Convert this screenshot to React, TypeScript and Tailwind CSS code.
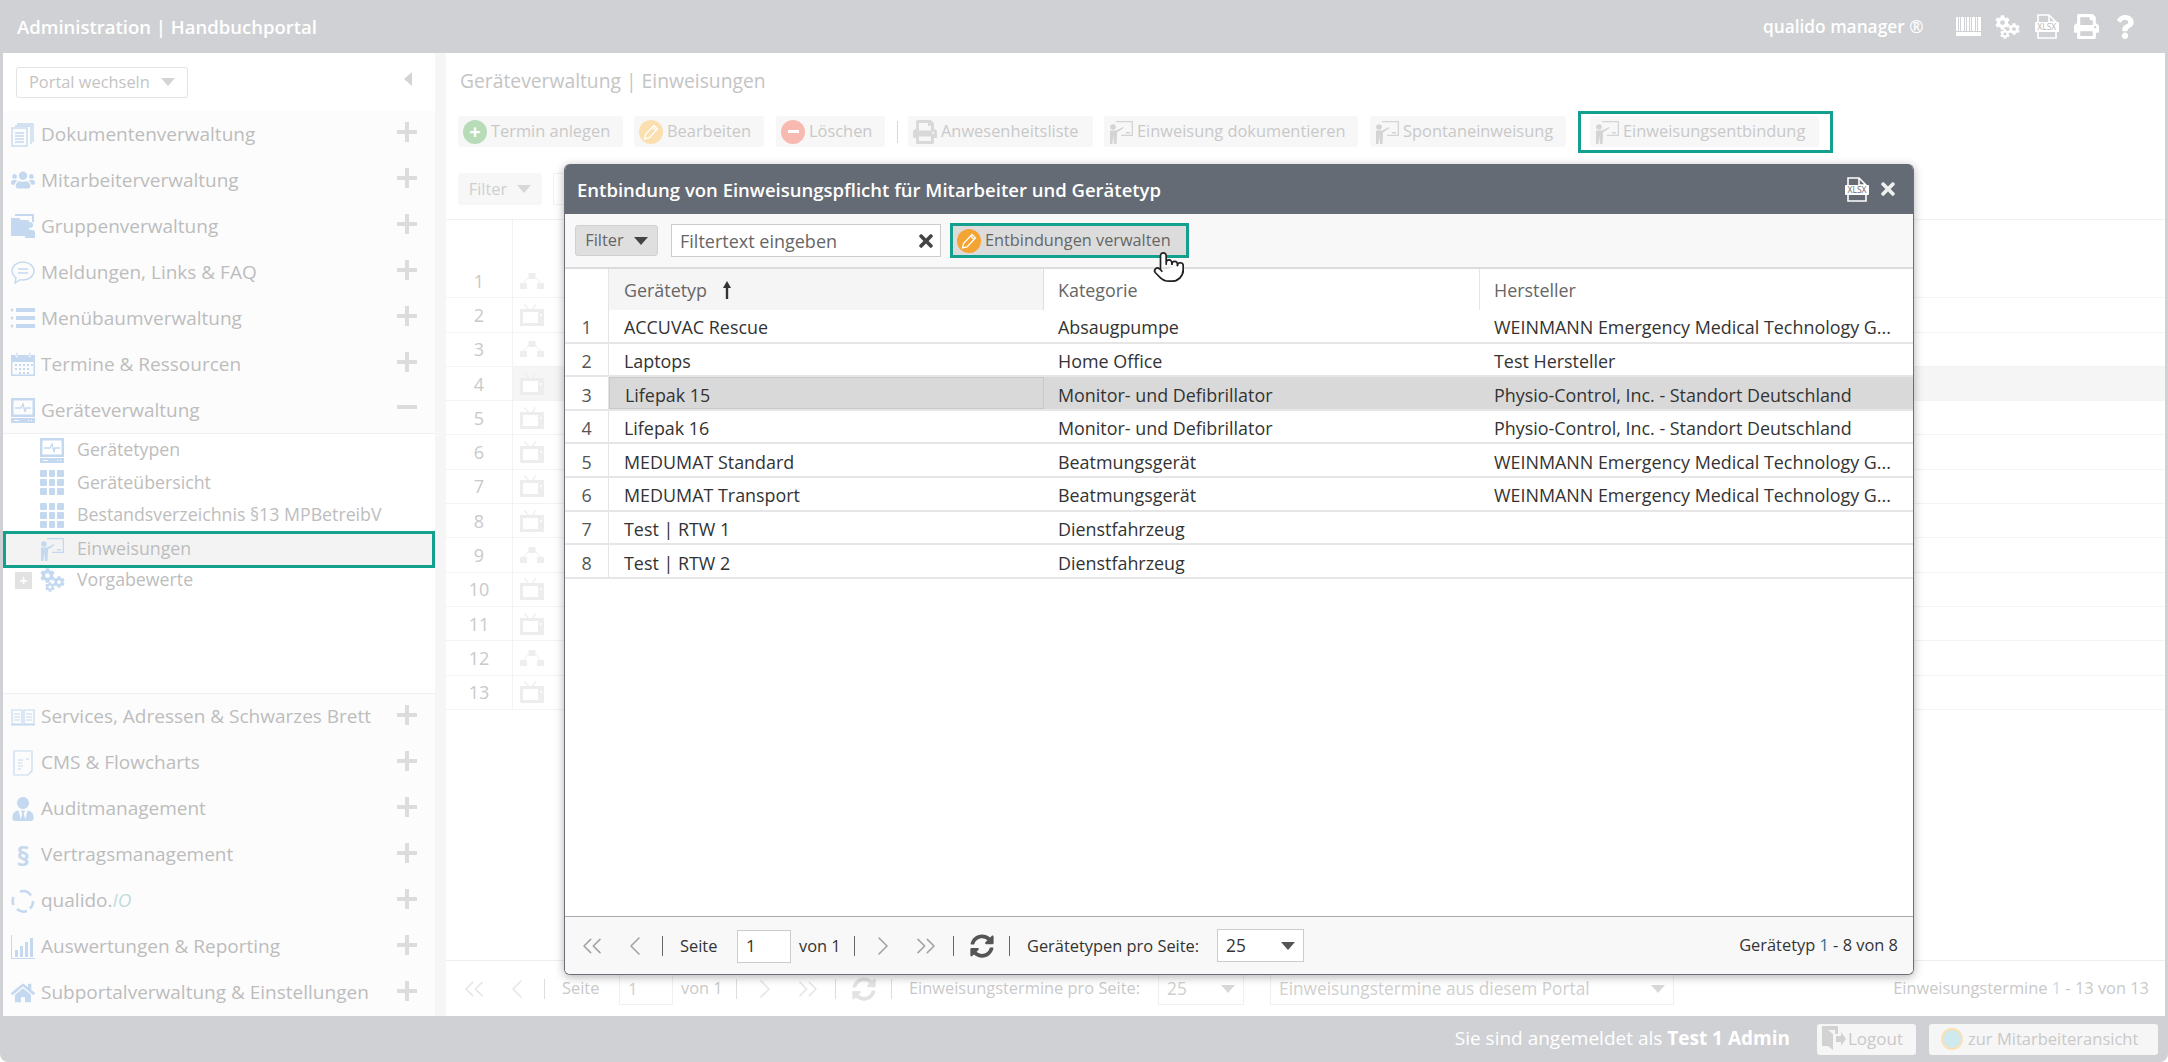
import React from 'react';
import { ChevronLeft, ChevronRight, ChevronsLeft, ChevronsRight, Pointer } from 'lucide-react';
import { FaCog, FaHome, FaPrint, FaQuestion, FaSyncAlt, FaTimes, FaUsers, FaUserTie } from 'react-icons/fa';

const BLUE = '#c4d9ef';

// Small drawn icons from the original icon set
const Docs = () => (
  <svg width="24" height="26" viewBox="0 0 24 26" fill="none" stroke={BLUE} strokeWidth="1.3">
    <path d="M6 3h16v18M4 5h16v18" />
    <rect x="1" y="7" width="15" height="18" fill="#fcfcfc" />
    <path d="M4 12h9M4 15h9M4 18h9M4 21h9" />
  </svg>
);
const Folder = () => (
  <svg width="24" height="26" viewBox="0 0 24 26" fill={BLUE}>
    <path d="M0 5h8l2 2h8v16H0z" />
    <path d="M4 3V1h19v8h-2V3z" />
    <circle cx="19" cy="12" r="3" />
    <path d="M14 25v-6c0-3 10-3 10 0v6z" />
  </svg>
);
const Bubble = () => (
  <svg width="24" height="24" viewBox="0 0 24 24" fill="none" stroke={BLUE} strokeWidth="1.4">
    <path d="M12 2c6 0 11 4 11 9s-5 9-11 9c-1 0-2 0-3-.3L4 23l1-5c-2-2-4-4-4-7 0-5 5-9 11-9z" />
    <path d="M7 9h10M7 13h10" />
  </svg>
);
const ListIcon = () => (
  <svg width="24" height="22" viewBox="0 0 24 22" fill={BLUE}>
    <path d="M0 1l3 2-3 2zM0 9l3 2-3 2zM0 17l3 2-3 2z" />
    <rect x="5" y="1" width="19" height="4" />
    <rect x="5" y="9" width="19" height="4" />
    <rect x="5" y="17" width="19" height="4" />
  </svg>
);
const Calendar = () => (
  <svg width="24" height="24" viewBox="0 0 24 24" fill={BLUE}>
    <path d="M0 3h24v21H0zm1.500 7v12.500h21V10z" fillRule="evenodd" />
    <path d="M4 12h2v2H4zM8 12h2v2H8zM12 12h2v2h-2zM16 12h2v2h-2zM20 12h2v2h-2zM4 16h2v2H4zM8 16h2v2H8zM12 16h2v2h-2zM16 16h2v2h-2zM8 20h2v2H8zM12 20h2v2h-2zM16 20h2v2h-2z" />
    <rect x="5" y="0" width="1.500" height="5" stroke="#fcfcfc" strokeWidth=".5" />
    <rect x="18" y="0" width="1.500" height="5" stroke="#fcfcfc" strokeWidth=".5" />
  </svg>
);
const Device = () => (
  <svg width="24" height="25" viewBox="0 0 24 25">
    <path d="M0 0h24v19H0zm2.500 2.500v14h19v-14z" fill={BLUE} fillRule="evenodd" />
    <path d="M4 10h6l2-4 2 8 1-4h5" fill="none" stroke={BLUE} strokeWidth="1.300" />
    <path d="M0 20h24v5H0zM3 22v1h5v-1zM17 22v1h1v-1zM20 22v1h1v-1z" fill={BLUE} fillRule="evenodd" />
  </svg>
);
const Grid9 = () => (
  <div className="grid grid-cols-3 gap-[2px] w-[24px]">
    {Array.from({ length: 9 }).map((_, i) => (
      <div key={i} className="h-[7px] rounded-[1px] bg-[#c4d9ef]" />
    ))}
  </div>
);
const Gears = ({ color }: { color: string }) => (
  <div className="relative w-[25px] h-[24px] shrink-0" style={{ color }}>
    <FaCog size={15} className="absolute left-0 top-0" />
    <FaCog size={12} className="absolute right-0 top-[8px]" />
    <FaCog size={10} className="absolute left-[5px] bottom-0" />
  </div>
);
const Teacher = ({ color = BLUE, w = 24 }: { color?: string; w?: number }) => (
  <svg width={w} height={w} viewBox="0 0 24 24" fill="none">
    <path d="M7 1h17v15H12v-1.300h10.700V2.300H7z" fill={color} />
    <circle cx="4" cy="7" r="2.800" fill={color} />
    <path d="M1 10.500h6l7-3.500.6 1-6.600 4.500v3L7.500 24H5l-.8-8-.8 8H1z" fill={color} />
    <rect x="17" y="12" width="4" height="1.500" fill={color} />
  </svg>
);
const Book = () => (
  <svg width="24" height="18" viewBox="0 0 24 18" fill="none" stroke={BLUE} strokeWidth="1.200">
    <path d="M1 2h10v14H1zM13 2h10v14H13zM0 17h24" />
    <path d="M3 6h6M3 9h6M3 12h6M15 6h6M15 9h6M15 12h6" />
  </svg>
);
const Page = () => (
  <svg width="20" height="26" viewBox="0 0 20 26" fill="none" stroke={BLUE} strokeWidth="1.200">
    <path d="M1 1h18v20l-4 4H1z" />
    <path d="M5 10h5M5 13h4M5 16h5M5 19h3M13 9h3" />
  </svg>
);
const Cycle = () => (
  <svg width="24" height="24" viewBox="0 0 24 24" fill="none" stroke={BLUE} strokeWidth="2.500">
    <path d="M9 2.500a10 10 0 0 1 11 4M22 12a10 10 0 0 1-3 7.500M16 22a10 10 0 0 1-10-2M2.500 16a10 10 0 0 1 0-8" />
  </svg>
);
const Bars = () => (
  <svg width="24" height="24" viewBox="0 0 24 24" fill={BLUE}>
    <path d="M0 0h1v23h23v1H0z" />
    <rect x="4" y="15" width="3" height="7" />
    <rect x="9" y="11" width="3" height="11" />
    <rect x="14" y="7" width="3" height="15" />
    <rect x="19" y="3" width="3" height="19" />
  </svg>
);
const Plus = () => (
  <svg width="20" height="20" viewBox="0 0 20 20" fill="#dcdcdc" className="-mt-[4px]">
    <rect x="0" y="8" width="20" height="4" />
    <rect x="8" y="0" width="4" height="20" />
  </svg>
);
const Minus = () => (
  <svg width="20" height="20" viewBox="0 0 20 20" fill="#dcdcdc" className="-mt-[6px]">
    <rect x="0" y="8" width="20" height="4" />
  </svg>
);
const Tv = () => (
  <svg width="24" height="22" viewBox="0 0 24 22">
    <path d="M5 0l4 5h3l3-5 1 .5L13.500 5H24v17H0V5h7.500L4 1z" fill="#ededed" />
    <rect x="3" y="8" width="15" height="11" fill="#fff" />
    <circle cx="21" cy="11" r="1" fill="#fff" />
  </svg>
);
const Net = () => (
  <svg width="24" height="16" viewBox="0 0 24 16" fill="#eeeeee">
    <rect x="8.500" y="0" width="7" height="6" />
    <rect x="0" y="10" width="7" height="6" />
    <rect x="17" y="10" width="7" height="6" />
    <path d="M9 4L3 10M15 4l6 6" stroke="#eeeeee" fill="none" />
  </svg>
);
const Xlsx = ({ ink }: { ink: string }) => (
  <div className="relative w-[24px] h-[25px] shrink-0">
    <svg width="24" height="25" viewBox="0 0 24 25" fill="none" stroke="#fff" strokeWidth="1.600">
      <path d="M3 8V1h11l7 7v1M21 18v6H3v-6M14 1v7h7" />
    </svg>
    <span className="absolute left-0 top-[8px] w-[24px] h-[10px] rounded-[1px] bg-white text-center text-[8.500px] leading-[10px]" style={{ color: ink }}>XLSX</span>
  </div>
);
const Barcode = () => (
  <svg width="25" height="19" viewBox="0 0 25 19" fill="#fff">
    <path d="M0 0h2v14H0zM3 0h1v14H3zM5 0h3v14H5zM9 0h1v14H9zM11 0h2v14h-2zM14 0h1v14h-1zM16 0h3v14h-3zM20 0h1v14h-1zM22 0h3v14h-3zM0 15h25v4H0z" />
  </svg>
);

const Triangle = ({ color }: { color: string }) => (
  <svg width="14" height="8" viewBox="0 0 14 8" fill={color} className="shrink-0">
    <path d="M0 0h14L7 8z" />
  </svg>
);

const NavRow = ({ icon, label, open, low }: { icon: React.ReactNode; label: React.ReactNode; open?: boolean; low?: boolean }) => (
  <div className="h-[46px] flex items-center pl-[8px] pr-[18px] text-[19px] text-[#bdbdbd]">
    <div className="w-[24px] flex justify-center shrink-0">{icon}</div>
    <span className={`ml-[6px] flex-1 whitespace-nowrap ${low ? '-mt-[1px]' : ''}`}>{label}</span>
    {open ? <Minus /> : <Plus />}
  </div>
);

const SubRow = ({ icon, label }: { icon: React.ReactNode; label: string }) => (
  <div className="h-[32.500px] flex items-center pl-[37px] text-[17.750px] text-[#bdbdbd]">
    <div className="w-[24px] flex justify-center shrink-0">{icon}</div>
    <span className="ml-[13px] -mt-[1px] whitespace-nowrap">{label}</span>
  </div>
);

const ToolBtn = ({ icon, label, w }: { icon: React.ReactNode; label: string; w: string }) => (
  <div className={`${w} h-[31px] flex items-center pl-[5px] rounded-[3px] bg-[#f7f7f7] text-[16.400px] text-[#c9c9c9] whitespace-nowrap shrink-0`}>
    {icon}
    <span className="ml-[4px] -mt-[1px]">{label}</span>
  </div>
);

const RoundIcon = ({ bg, children }: { bg: string; children: React.ReactNode }) => (
  <div className={`w-[24px] h-[24px] rounded-full flex items-center justify-center shrink-0 ${bg}`}>{children}</div>
);

const Pencil = ({ color }: { color: string }) => (
  <svg width="16" height="16" viewBox="0 0 16 16" fill="none" stroke={color} strokeWidth="1.300">
    <path d="M11 1.500l3.500 3.500L6 14l-4.500 1 1-4.500zM9.500 3l3.500 3.500" />
  </svg>
);

const Sep = ({ color }: { color: string }) => <div className={`w-px h-[20px] shrink-0 ${color}`} />;

const Slot = ({ children, ml }: { children: React.ReactNode; ml?: boolean }) => (
  <div className={`w-[43px] flex justify-center shrink-0 ${ml ? 'ml-[6px]' : ''}`}>{children}</div>
);

const Pager = ({ active, label }: { active?: boolean; label: string }) => {
  const icon = active ? '#a3a3a3' : '#e6e6e6';
  const sep = active ? 'bg-[#666]' : 'bg-[#dedede]';
  const text = active ? 'text-[#333] pt-[1px]' : 'text-[#c9c9c9]';
  const box = active ? 'border-[#ccc] text-[#333] bg-white' : 'border-[#f0f0f0] text-[#cfcfcf] bg-white';
  return (
    <div className={`flex items-center text-[16.400px] whitespace-nowrap ${text}`}>
      <Slot><ChevronsLeft size={32} strokeWidth={1.2} color={icon} /></Slot>
      <Slot><ChevronLeft size={32} strokeWidth={1.2} color={icon} /></Slot>
      <Sep color={`ml-[6px] ${sep}`} />
      <span className="ml-[17px] w-[37px]">Seite</span>
      <div className={`ml-[20px] w-[54px] h-[33px] border px-[8px] flex items-center text-[17px] shrink-0 ${box}`}>1</div>
      <span className="ml-[8px] w-[40px]">von 1</span>
      <Sep color={`ml-[15px] ${sep}`} />
      <Slot ml><ChevronRight size={32} strokeWidth={1.2} color={icon} /></Slot>
      <Slot><ChevronsRight size={32} strokeWidth={1.2} color={icon} /></Slot>
      <Sep color={`ml-[6px] ${sep}`} />
      <Slot ml><FaSyncAlt size={24} color={active ? '#555' : '#e3e3e3'} /></Slot>
      <Sep color={`ml-[6px] ${sep}`} />
      <span className="ml-[17px]">{label}</span>
    </div>
  );
};

const SelectBox = ({ w, value, active }: { w: string; value: string; active?: boolean }) => (
  <div className={`${w} h-[33px] border px-[8px] flex items-center justify-between text-[17.250px] shrink-0 whitespace-nowrap ${active ? 'border-[#ccc] text-[#333] bg-white' : 'border-[#f0f0f0] text-[#cfcfcf] bg-white'}`}>
    <span>{value}</span>
    <Triangle color={active ? '#555' : '#d8d8d8'} />
  </div>
);

const pageRows: ('net' | 'tv')[] = ['net', 'tv', 'net', 'tv', 'tv', 'tv', 'tv', 'tv', 'net', 'tv', 'tv', 'net', 'tv'];

const modalRows = [
  ['ACCUVAC Rescue', 'Absaugpumpe', 'WEINMANN Emergency Medical Technology G...'],
  ['Laptops', 'Home Office', 'Test Hersteller'],
  ['Lifepak 15', 'Monitor- und Defibrillator', 'Physio-Control, Inc. - Standort Deutschland'],
  ['Lifepak 16', 'Monitor- und Defibrillator', 'Physio-Control, Inc. - Standort Deutschland'],
  ['MEDUMAT Standard', 'Beatmungsgerät', 'WEINMANN Emergency Medical Technology G...'],
  ['MEDUMAT Transport', 'Beatmungsgerät', 'WEINMANN Emergency Medical Technology G...'],
  ['Test | RTW 1', 'Dienstfahrzeug', ''],
  ['Test | RTW 2', 'Dienstfahrzeug', ''],
];

const Modal = () => (
  <div className="absolute left-[564px] top-[164px] w-[1350px] h-[811px] flex flex-col bg-white rounded-[6px] border border-[#6a6f78] border-t-0 shadow-[0_2px_10px_rgba(0,0,0,0.3)] overflow-hidden">
    <div className="h-[50px] shrink-0 bg-[#656b75] flex items-center pl-[12px] pr-[15px] text-white">
      <span className="flex-1 pt-[1px] text-[18.500px] font-semibold">Entbindung von Einweisungspflicht für Mitarbeiter und Gerätetyp</span>
      <Xlsx ink="#656b75" />
      <FaTimes size={20} className="ml-[9px]" color="#f0f0f0" />
    </div>
    <div className="h-[55px] shrink-0 bg-[#f8f8f8] border-b-2 border-[#dcdcdc] flex items-center pl-[10px] text-[18px]">
      <div className="w-[83px] h-[31px] rounded-[3px] bg-[#dfdfdf] border border-[#d0d0d0] flex items-center justify-center gap-[10px] text-[16.400px] text-[#666]">
        Filter <Triangle color="#444" />
      </div>
      <div className="ml-[13px] w-[270px] h-[33px] border border-[#ccc] bg-white flex items-center justify-between pl-[8px] pr-[4px] pt-[1px] text-[#666]">
        Filtertext eingeben <FaTimes size={20} color="#444" />
      </div>
      <div className="ml-[9px] w-[239px] h-[35px] border-[3px] border-[#13a08d] bg-[#dcdcdc] flex items-center pl-[4px] text-[16.300px] text-[#666] whitespace-nowrap">
        <RoundIcon bg="bg-[#f3a433]"><Pencil color="#fff" /></RoundIcon>
        <span className="ml-[4px]">Entbindungen verwalten</span>
      </div>
    </div>
    <div className="flex-1 flex flex-col text-[17.900px] text-[#333]">
      <div className="h-[41px] shrink-0 flex text-[#666]">
        <div className="w-[44px] border-r border-[#e5e5e5]" />
        <div className="w-[435px] pl-[15px] pt-[1px] bg-[#f5f5f5] border-r border-[#dedede] flex items-center gap-[15px]">
          Gerätetyp
          <svg width="10" height="18" viewBox="0 0 10 18" fill="#333"><path d="M5 0l4 7H6.200v11H3.800V7H1z" /></svg>
        </div>
        <div className="w-[436px] pl-[14px] pt-[1px] border-r border-[#e5e5e5] flex items-center">Kategorie</div>
        <div className="flex-1 pl-[14px] pt-[1px] flex items-center">Hersteller</div>
      </div>
      {modalRows.map((r, i) => (
        <div key={i} className={`h-[33.600px] shrink-0 flex border-b-2 border-[#e6e6e6] whitespace-nowrap ${i === 2 ? 'bg-[#d9d9d9]' : ''}`}>
          <div className="w-[44px] border-r border-[#e5e5e5] bg-white flex items-center justify-center pt-[4px] text-[#555]">{i + 1}</div>
          <div className={`w-[435px] pl-[15px] flex items-center pt-[4px] ${i === 2 ? 'border border-[#c8c8c8]' : ''}`}>{r[0]}</div>
          <div className="w-[436px] pl-[14px] flex items-center pt-[4px]">{r[1]}</div>
          <div className="flex-1 pl-[14px] flex items-center pt-[4px]">{r[2]}</div>
        </div>
      ))}
    </div>
    <div className="h-[58px] shrink-0 bg-[#f8f8f8] border-t border-[#aaa] flex items-center pl-[5px] pr-[15px]">
      <Pager active label="Gerätetypen pro Seite:" />
      <div className="ml-[18px]"><SelectBox w="w-[87px]" value="25" active /></div>
      <span className="ml-auto text-[16.400px] text-[#333]">Gerätetyp <span className="text-[#2a6f97]">1</span> - 8 von 8</span>
    </div>
  </div>
);

export default function App() {
  return (
    <div className="relative w-[2168px] h-[1062px] overflow-hidden flex flex-col bg-[#d0d1d4] text-[#333] [font-family:'Open_Sans',sans-serif] rounded-b-[8px]">
      <header className="h-[53px] shrink-0 flex items-center pl-[17px] pr-[23px] text-white">
        <span className="flex-1 text-[18.500px] font-semibold">Administration | Handbuchportal</span>
        <span className="text-[17.300px] font-semibold mr-[25px]">qualido manager ®</span>
        <div className="flex items-center">
          <div className="w-[39.300px] flex justify-center"><Barcode /></div>
          <div className="w-[39.300px] flex justify-center"><Gears color="#fff" /></div>
          <div className="w-[39.300px] flex justify-center"><Xlsx ink="#b5b6ba" /></div>
          <div className="w-[39.300px] flex justify-center"><FaPrint size={25} /></div>
          <div className="w-[39.300px] flex justify-center"><FaQuestion size={24} /></div>
        </div>
      </header>

      <div className="flex-1 flex mx-[3px] min-h-0 bg-[#f6f6f6]">
        <aside className="w-[432px] shrink-0 flex flex-col bg-white">
          <div className="h-[58px] shrink-0 flex items-center pl-[13px] pr-[23px] justify-between">
            <div className="w-[172px] h-[31px] border border-[#e3e3e3] rounded-[3px] flex items-center justify-between px-[12px] text-[16.400px] text-[#c4c4c4]">
              Portal wechseln <Triangle color="#d4d4d4" />
            </div>
            <svg width="8" height="14" viewBox="0 0 8 14" fill="#d4d4d4" className="-mt-[6px]"><path d="M8 0v14L0 7z" /></svg>
          </div>
          <div className="bg-[#fcfcfc] border-b border-[#f0f0f0] shrink-0">
            <NavRow icon={<Docs />} label="Dokumentenverwaltung" />
            <NavRow icon={<FaUsers size={24} color={BLUE} />} label="Mitarbeiterverwaltung" />
            <NavRow icon={<Folder />} label="Gruppenverwaltung" />
            <NavRow icon={<Bubble />} label="Meldungen, Links & FAQ" />
            <NavRow icon={<ListIcon />} label="Menübaumverwaltung" />
            <NavRow icon={<Calendar />} label="Termine & Ressourcen" />
            <NavRow icon={<Device />} label="Geräteverwaltung" open />
          </div>
          <div className="flex-1 min-h-0 flex flex-col">
            <SubRow icon={<Device />} label="Gerätetypen" />
            <SubRow icon={<Grid9 />} label="Geräteübersicht" />
            <SubRow icon={<Grid9 />} label="Bestandsverzeichnis §13 MPBetreibV" />
            <div className="h-[37px] -mt-[1px] shrink-0 border-[3px] border-[#13a08d] bg-[#f3f3f3] flex items-center pl-[34px] text-[17.750px] text-[#bdbdbd]">
              <Teacher />
              <span className="ml-[13px] -mt-[1px]">Einweisungen</span>
            </div>
            <div className="h-[25px] shrink-0 flex items-center pl-[12px] text-[17.750px] text-[#bdbdbd]">
              <div className="w-[17px] h-[17px] bg-[#e2e2e2] flex items-center justify-center text-white text-[15px] font-bold leading-none rounded-[1px]">+</div>
              <div className="ml-[8px] w-[24px] flex justify-center"><Gears color={BLUE} /></div>
              <span className="ml-[13px] -mt-[1px]">Vorgabewerte</span>
            </div>
          </div>
          <div className="bg-[#fcfcfc] border-t border-[#f0f0f0] shrink-0">
            <NavRow low icon={<Book />} label="Services, Adressen & Schwarzes Brett" />
            <NavRow low icon={<Page />} label="CMS & Flowcharts" />
            <NavRow low icon={<FaUserTie size={24} color={BLUE} />} label="Auditmanagement" />
            <NavRow low icon={<span className="text-[27px] font-bold leading-none text-[#c4d9ef]">§</span>} label="Vertragsmanagement" />
            <NavRow low icon={<Cycle />} label={<>qualido.<i className="text-[#c2dcdc]">IO</i></>} />
            <NavRow low icon={<Bars />} label="Auswertungen & Reporting" />
            <NavRow low icon={<FaHome size={26} color={BLUE} />} label="Subportalverwaltung & Einstellungen" />
          </div>
        </aside>

        <main className="ml-[11px] flex-1 min-w-0 flex flex-col bg-white">
          <div className="h-[56px] shrink-0 flex items-center pl-[14px] text-[19.300px] text-[#c4c4c4]">Geräteverwaltung | Einweisungen</div>
          <div className="h-[31px] mt-[7px] shrink-0 flex items-center pl-[12px]">
            <ToolBtn w="w-[165px]" label="Termin anlegen" icon={<RoundIcon bg="bg-[#b8dcb8]"><span className="text-white text-[20px] font-bold leading-none">+</span></RoundIcon>} />
            <div className="ml-[11px]"><ToolBtn w="w-[130px]" label="Bearbeiten" icon={<RoundIcon bg="bg-[#fbdfae]"><Pencil color="#fff" /></RoundIcon>} /></div>
            <div className="ml-[12px]"><ToolBtn w="w-[109px]" label="Löschen" icon={<RoundIcon bg="bg-[#f8b9b0]"><span className="w-[11px] h-[3px] bg-white" /></RoundIcon>} /></div>
            <div className="ml-[12px] w-px h-[22px] bg-[#d8d8d8] shrink-0" />
            <div className="ml-[10px]"><ToolBtn w="w-[185px]" label="Anwesenheitsliste" icon={<FaPrint size={24} color="#d9d9d9" />} /></div>
            <div className="ml-[11px]"><ToolBtn w="w-[254px]" label="Einweisung dokumentieren" icon={<Teacher color="#d4d4d4" />} /></div>
            <div className="ml-[12px]"><ToolBtn w="w-[196px]" label="Spontaneinweisung" icon={<Teacher color="#d4d4d4" />} /></div>
            <div className="ml-[12px] w-[255px] h-[42px] shrink-0 border-[3px] border-[#13a08d] flex items-center pl-[9px]">
              <ToolBtn w="w-[229px]" label="Einweisungsentbindung" icon={<Teacher color="#d4d4d4" />} />
            </div>
          </div>
          <div className="h-[32px] mt-[26px] shrink-0 flex items-center pl-[12px] gap-[11px]">
            <div className="w-[84px] h-[32px] rounded-[3px] bg-[#f7f7f7] flex items-center justify-center gap-[10px] text-[16.400px] text-[#cfcfcf]">Filter <Triangle color="#d8d8d8" /></div>
            <div className="w-[200px] h-[32px] border border-[#f0f0f0]" />
          </div>
          <div className="flex-1 mt-[14px] border-t border-[#f0f0f0] text-[18px] text-[#c9c9c9]">
            <div className="h-[44px] flex">
              <div className="w-[67px] border-r border-[#f3f3f3]" />
            </div>
            {pageRows.map((t, i) => (
              <div key={i} className="h-[34.300px] flex border-b border-[#f3f3f3]">
                <div className="w-[67px] border-r border-[#f3f3f3] flex items-center justify-center pt-[1px]">{i + 1}</div>
                <div className={`flex-1 flex items-center pl-[7px] ${i === 3 ? 'bg-[#f5f5f5]' : ''}`}>{t === 'net' ? <Net /> : <Tv />}</div>
              </div>
            ))}
          </div>
          <div className="h-[56px] shrink-0 border-t border-[#eeeeee] flex items-center pl-[6px] pr-[16px]">
            <Pager label="Einweisungstermine pro Seite:" />
            <div className="ml-[18px]"><SelectBox w="w-[86px]" value="25" /></div>
            <div className="ml-[26px]"><SelectBox w="w-[404px]" value="Einweisungstermine aus diesem Portal" /></div>
            <span className="ml-auto text-[16.400px] text-[#c9c9c9] whitespace-nowrap">Einweisungstermine <span className="text-[#c6dbe6]">1</span> - 13 von 13</span>
          </div>
        </main>
      </div>

      <footer className="h-[46px] shrink-0 flex items-center justify-end pr-[10px] text-[19px] text-white">
        <span className="-mt-[1px]">Sie sind angemeldet als <b className="font-bold">Test 1 Admin</b></span>
        <div className="ml-[27px] w-[99px] h-[31px] rounded-[3px] bg-[#f6f6f6] flex items-center pl-[5px] text-[17px] text-[#c9c9c9]">
          <svg width="24" height="26" viewBox="0 0 24 26" fill="#d2d2d2"><path d="M0 0h16v8h-3V4H6l5 4v16l-5-4H0zM14 10h5V6l5 7-5 7v-4h-5z" /></svg>
          <span className="ml-[2px]">Logout</span>
        </div>
        <div className="ml-[13px] w-[229px] h-[31px] rounded-[3px] bg-[#f6f6f6] flex items-center pl-[12px] text-[16.500px] text-[#c9c9c9] whitespace-nowrap">
          <div className="w-[22px] h-[22px] rounded-full border-[2px] border-[#fbe0b4] bg-[#cfeaee] shrink-0" />
          <span className="ml-[5px]">zur Mitarbeiteransicht</span>
        </div>
      </footer>

      <Modal />
      <div className="absolute left-[1152px] top-[250px]">
        <Pointer size={34} fill="#fff" color="#222" strokeWidth={1.2} />
      </div>
    </div>
  );
}
